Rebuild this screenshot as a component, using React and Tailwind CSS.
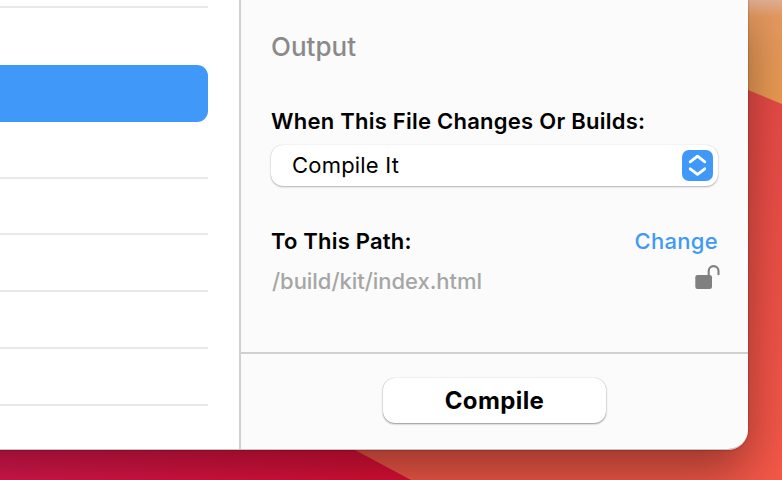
import React from "react";
import clsx from "clsx";

const rows = [
  { id: 1, height: "h-2", line: true },
  { id: 2, height: "h-[57px]" },
  { id: 3, height: "h-[57px]", selected: true },
  { id: 4, height: "h-[57px]", line: true },
  { id: 5, height: "h-[56px]", line: true },
  { id: 6, height: "h-[57px]", line: true },
  { id: 7, height: "h-[57px]", line: true },
  { id: 8, height: "h-[57px]", line: true },
];

function Wallpaper() {
  return (
    <svg className="absolute inset-0" width="782" height="480" viewBox="0 0 782 480">
      <defs>
        <linearGradient id="sand" x1="0" y1="0" x2="0" y2="1">
          <stop offset="0" stopColor="#dfae94" />
          <stop offset="0.16" stopColor="#e5995f" />
          <stop offset="1" stopColor="#eb9b51" />
        </linearGradient>
        <linearGradient id="coral" x1="0" y1="0" x2="0" y2="1">
          <stop offset="0" stopColor="#e74a46" />
          <stop offset="1" stopColor="#f55848" />
        </linearGradient>
        <linearGradient id="crimson" x1="0" y1="0" x2="1" y2="0">
          <stop offset="0" stopColor="#e31850" />
          <stop offset="1" stopColor="#e30f36" />
        </linearGradient>
      </defs>
      <rect y="90" width="782" height="390" fill="url(#coral)" />
      <path d="M700 0H782V104L748 90L700 71Z" fill="url(#sand)" />
      <path d="M0 400H262L355 450L411 480H0Z" fill="url(#crimson)" />
    </svg>
  );
}

function FileList() {
  return (
    <div className="w-[319px] bg-white">
      <ul className="w-[288px]">
        {rows.map((row) => (
          <li
            key={row.id}
            className={clsx(
              row.height,
              row.line && "border-b-2 border-[#e9e9e9]",
              row.selected && "rounded-r-[11px] bg-[#4099f9]"
            )}
          />
        ))}
      </ul>
    </div>
  );
}

function UnlockIcon() {
  return (
    <svg className="mt-[7px] -mr-0.5" width="25" height="26" viewBox="0 0 25 26" fill="none">
      <rect x="0.3" y="11" width="16.7" height="14" rx="2.2" fill="#808080" />
      <path
        d="M13.7 11.5V7A4.9 4.9 0 0 1 23.5 7V10.2"
        stroke="#808080"
        strokeWidth="2.1"
        strokeLinecap="round"
      />
    </svg>
  );
}

function OutputPanel() {
  return (
    <div className="flex flex-1 flex-col border-l-2 border-[#d1d1d1] bg-[#fbfbfb]">
      <div className="h-[354px] border-b-2 border-[#d1d1d1] px-[30px] pt-[31px]">
        <h2 className="text-[26px] leading-8 font-medium text-[#8a8a8a]">
          <span>Output</span>
        </h2>

        <div className="mt-[42px] text-[22px] leading-8 font-[560] tracking-[0.25px] text-black">
          <span>When This File Changes Or Builds:</span>
        </div>
        <button className="mt-2 flex h-[41px] w-[447px] items-center justify-between rounded-[12px] bg-white pr-[5px] pl-[21px] text-left shadow-[0_0_1px_rgba(0,0,0,0.2),0_1px_2px_rgba(0,0,0,0.28)]">
          <span className="pb-px text-[22px] leading-8 tracking-[0.2px] text-black">Compile It</span>
          <svg width="31" height="31" viewBox="0 0 31 31" fill="none">
            <rect width="31" height="31" rx="7" fill="#4099f9" />
            <path
              d="M8.2 11.8L15.5 6.2L22.8 11.8M8.2 18.8L15.5 24.4L22.8 18.8"
              stroke="white"
              strokeWidth="2.8"
              strokeLinecap="round"
              strokeLinejoin="round"
            />
          </svg>
        </button>

        <div className="mt-[39px] flex justify-between text-[22px] leading-8">
          <span className="font-[560] tracking-[0.2px] text-black">To This Path:</span>
          <a href="#" className="font-[450] tracking-[0.3px] text-[#4099f9]">Change</a>
        </div>
        <div className="flex justify-between text-[22px]">
          <span className="mt-2 pl-px leading-8 font-[450] tracking-[-0.04px] text-[#a6a6a6]">/build/kit/index.html</span>
          <UnlockIcon />
        </div>
      </div>

      <div className="flex justify-center pt-6">
        <button className="h-[45px] w-[223px] rounded-[12px] bg-white pt-px text-[24px] leading-8 font-bold tracking-[0.4px] text-black shadow-[0_0_1px_rgba(0,0,0,0.25),0_1px_2px_rgba(0,0,0,0.4)]">
          Compile
        </button>
      </div>
    </div>
  );
}

export default function App() {
  return (
    <div className="relative h-[480px] w-[782px] overflow-hidden font-['Inter',sans-serif]">
      <Wallpaper />
      {/* window runs past the left edge of the screen */}
      <div className="relative -ml-20 flex h-[450px] w-[828px] overflow-hidden rounded-br-[20px] border-b border-[#c4c4c4] shadow-[0_0_2px_rgba(0,0,0,0.4),0_22px_50px_rgba(0,0,0,0.38)]">
        <FileList />
        <OutputPanel />
      </div>
    </div>
  );
}
